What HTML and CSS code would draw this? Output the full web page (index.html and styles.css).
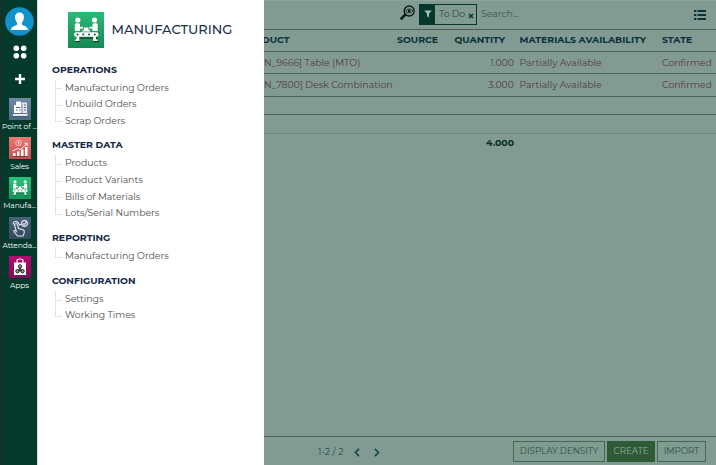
FILE: index.html
```html
<!DOCTYPE html>
<html lang="en">
<head>
<meta charset="utf-8">
<title>Manufacturing</title>
<link rel="stylesheet" href="styles.css">
</head>
<body>
<svg width="0" height="0" class="defs">
  <symbol id="factory" viewBox="0 0 36 36">
    <path d="M8 26h22M7 29.700h5M25 29.700h6" fill="none" stroke="#16492f" stroke-width="1.300"/>
    <g fill="#fff">
      <circle cx="9.800" cy="8" r="2.600"/><circle cx="26.500" cy="8" r="2.600"/>
      <path d="M6.800 12c0-1 5.200-1 5.200 0v2.800h3v2h-3V19H6.800zM29.700 12c0-1-5.200-1-5.200 0v2.800h-3v2h3V19h5.200z"/>
      <path d="M14.500 18h1.500v-2.500h4.500V18H22v1.500h-7.500z"/>
      <rect x="6" y="20.200" width="24.500" height="4.600" rx="2.300"/>
      <path d="M8.500 24.500h2.800V29H7v-1.500h1.500zM28 24.500h-2.800V29h4.300v-1.500H28z"/>
    </g>
    <g fill="#16492f"><circle cx="9.500" cy="22.500" r="1"/><circle cx="15.200" cy="22.500" r="1"/><circle cx="21" cy="22.500" r="1"/><circle cx="26.800" cy="22.500" r="1"/></g>
  </symbol>
</svg>
<div class="app">
  <nav class="rail">
    <svg class="avatar" viewBox="0 0 29 29"><circle cx="14.500" cy="14.500" r="14.300" fill="#1193c9"/><path d="M14.500 5.500c3.300 0 4.600 2.300 4.400 5.200-.2 2.200-1 3.800-2 4.800v2c1 1.500 5.800 1.500 6.300 5.500H5.800c.5-4 5.300-4 6.300-5.500v-2c-1-1-1.800-2.600-2-4.800-.2-2.900 1.100-5.200 4.400-5.200z" fill="#fff"/></svg>
    <svg class="dots" viewBox="0 0 14 14" fill="#fff"><circle cx="3.300" cy="3.300" r="2.800"/><circle cx="10.700" cy="3.300" r="2.800"/><circle cx="3.300" cy="10.700" r="2.800"/><circle cx="10.700" cy="10.700" r="2.800"/></svg>
    <svg class="plus" viewBox="0 0 12 12"><path d="M6 1v10M1 6h10" stroke="#fff" stroke-width="2.400"/></svg>
    <a class="tile pos"><svg viewBox="0 0 22 22"><path d="M5 7h9v8.500H5z" fill="#fff"/><path d="M12.500 4.500H18v11h-5.500zM4 15.500h14.500V18H4z" fill="#e4eaf0"/><path d="M7 3.500h5v4H7z" fill="#fff"/><path d="M7 9.500h4.500M7 12h1.500M10 12h1.500M15 7h2M15 9.500h2M15 12h2" stroke="#48627c"/><path d="M4 18.500h15M13 6.500V15M4 15.500h14" stroke="#354e68" stroke-width=".7"/></svg><span>Point of ...</span></a>
    <a class="tile sales"><svg viewBox="0 0 22 22"><path d="M4 16h2.500v3H4zM8 14.500h2.500V19H8zM12 12.500h2.500V19H12zM16 10h2.500v9H16z" fill="#fff"/><path d="M3.500 14l5-2.500 3 1L18 6.500M15.500 6.200h2.700v2.700" fill="none" stroke="#fff"/><circle cx="9.500" cy="6" r="2.800" fill="none" stroke="#f8d8d6" stroke-width=".8"/><path d="M9.700 4.500v3M8.800 5.300h1" stroke="#fff" stroke-width=".8"/><path d="M3.500 19.500h15.500" stroke="#7b3230" stroke-width=".8"/></svg><span>Sales</span></a>
    <a class="tile mfg"><svg viewBox="0 0 36 36"><use href="#factory"/></svg><span>Manufa...</span></a>
    <a class="tile att"><svg viewBox="0 0 22 22" fill="none" stroke="#e4eaf0" stroke-width="1.100"><circle cx="15.500" cy="6.500" r="2.900"/><path d="M14 6.500l1.200 1.200 2.600-3M4 7.500c0-4 5.500-4 6 0M5.500 8c.5-2 3-2 3 0l1 3.500 5 1.500c1.500 1 .500 4-.500 6H8.500L5 14.500c-.5-1.200 1-1.500 2.300-.300zM10 8l3-1"/></svg><span>Attenda...</span></a>
    <a class="tile apps"><svg viewBox="0 0 22 22"><path d="M5 6.500h12V19H5z" fill="#fff"/><path d="M8 8V4.500c0-2 6-2 6 0V8" fill="none" stroke="#fff" stroke-width="1.200"/><g fill="#999" stroke="#222"><circle cx="11" cy="10.500" r="1.700"/><circle cx="8.500" cy="15.200" r="1.700"/><circle cx="13.500" cy="15.200" r="1.700"/><path d="M11 12l-1.500 2.500h3z"/></g></svg><span>Apps</span></a>
  </nav>

  <aside class="menu">
    <header class="title"><svg viewBox="0 0 36 36"><use href="#factory"/></svg><h1>MANUFACTURING</h1></header>
    <section><h2>OPERATIONS</h2><ul><li>Manufacturing Orders</li><li>Unbuild Orders</li><li>Scrap Orders</li></ul></section>
    <section><h2>MASTER DATA</h2><ul><li>Products</li><li>Product Variants</li><li>Bills of Materials</li><li>Lots/Serial Numbers</li></ul></section>
    <section><h2>REPORTING</h2><ul><li>Manufacturing Orders</li></ul></section>
    <section><h2>CONFIGURATION</h2><ul><li>Settings</li><li>Working Times</li></ul></section>
  </aside>

  <main class="content">
    <div class="search">
      <svg class="lens" viewBox="0 0 16 16"><circle cx="9.200" cy="6" r="5" fill="none" stroke="#0a1d1a" stroke-width="1.400"/><path d="M5.300 9.700L1.500 13.500" stroke="#0a1d1a" stroke-width="2.600" stroke-linecap="round"/><path d="M5.500 6c2-2.700 5.400-2.700 7.400 0-2 2.500-5.400 2.500-7.400 0z" fill="none" stroke="#0a1d1a" stroke-width=".8"/><circle cx="9.200" cy="6" r="1.400" fill="#0a1d1a"/></svg>
      <div class="facet"><span class="funnel"><svg viewBox="0 0 8 8"><path d="M.3.500h7.400L5 3.800v3.700L3 6.300V3.800z" fill="#a6bbb3"/></svg></span><span class="todo">To Do</span><svg class="x" viewBox="0 0 6 6"><path d="M1 1l4 4M5 1L1 5" stroke="#04382d" stroke-width="1.500"/></svg></div>
      <span class="placeholder">Search...</span>
      <svg class="list" viewBox="0 0 12 10"><path d="M0 1h2.400M0 5h2.400M0 9h2.400M3.600 1H12M3.600 5H12M3.600 9H12" stroke="#0c3337" stroke-width="2"/></svg>
    </div>
    <div class="row head"><span class="product"><span>DUCT</span></span><span class="source">SOURCE</span><span class="qty">QUANTITY</span><span class="avail">MATERIALS AVAILABILITY</span><span class="state">STATE</span></div>
    <div class="row"><span class="product">N_9666] Table (MTO)</span><span></span><span class="qty">1.000</span><span class="avail">Partially Available</span><span class="state">Confirmed</span></div>
    <div class="row last"><span class="product">N_7800] Desk Combination</span><span></span><span class="qty">3.000</span><span class="avail">Partially Available</span><span class="state">Confirmed</span></div>
    <div class="blank"></div>
    <div class="blank faint"></div>
    <div class="row total"><span></span><span></span><span class="qty">4.000</span></div>
    <footer class="bottom">
      <span class="pages">1-2 / 2</span>
      <svg class="arrow" viewBox="0 0 6 9"><path d="M5 .800L1.500 4.500 5 8.200" fill="none" stroke="#194a49" stroke-width="1.700"/></svg>
      <svg class="arrow next" viewBox="0 0 6 9"><path d="M1 .800l3.500 3.700L1 8.200" fill="none" stroke="#194a49" stroke-width="1.700"/></svg>
      <div class="buttons"><button class="density">DISPLAY DENSITY</button><button class="create">CREATE</button><button class="import">IMPORT</button></div>
    </footer>
  </main>
</div>
</body>
</html>
```

FILE: styles.css
```css
* { box-sizing: border-box; }
body { margin: 0; font-family: Montserrat, Inter, sans-serif; font-size: 9.350px; color: #555; }
h1, h2, ul { margin: 0; padding: 0; font-weight: normal; }
svg { display: block; flex: none; }
.defs { position: absolute; }
.app { display: flex; width: 716px; height: 465px; overflow: hidden; background: #fff; }

.rail { width: 38px; flex: none; padding: 7px 0 0 1px; border-left: 1px solid #292929; border-right: 1px solid #d3dfdb; background: #033a2c; display: flex; flex-direction: column; align-items: center; }
.avatar { width: 29px; height: 29px; }
.dots { width: 14px; height: 14px; margin-top: 9px; }
.plus { width: 12px; height: 12px; margin: 14px 0 12.500px; }
.tile { height: 39.700px; width: 36px; display: flex; flex-direction: column; align-items: center; color: #fff; font-size: 7.500px; line-height: 9px; white-space: nowrap; letter-spacing: -.1px; }
.tile svg { width: 22px; height: 22px; margin-bottom: 2.500px; background: linear-gradient(#718aa5, #4e6984); }
.tile.sales svg { background: linear-gradient(#ec7773, #c94f4e); }
.tile.mfg svg { background: linear-gradient(#28c47b, #149358); }
.tile.att svg { background: linear-gradient(#496179, #35495d); }
.tile.apps svg { background: linear-gradient(#b10b73, #8b0759); }

.menu { width: 226px; flex: none; padding: 11px 0 0 14px; }
.title { display: flex; align-items: center; height: 37px; margin: 0 0 11.500px 16px; }
.title svg { width: 36px; height: 36px; background: linear-gradient(#29bb78, #178853); }
.title h1 { margin: -2px 0 0 7.500px; font-size: 13px; font-weight: 500; color: #1b2f4b; }
section { margin-bottom: 6.200px; }
h2 { height: 20px; line-height: 19.500px; font-size: 9.350px; font-weight: 700; color: #142848; }
ul { list-style: none; }
li { display: flex; height: 16.600px; line-height: 16px; margin-left: 3px; color: #505050; white-space: nowrap; letter-spacing: -.02px; }
li::before { content: ""; width: 6px; height: 8.800px; margin-right: 3px; border-left: 1px solid #dfe2e5; border-bottom: 1px solid #dfe2e5; }
li:not(:last-child) { background: linear-gradient(#dfe2e5, #dfe2e5) left / 1px 100% no-repeat; }

.content { width: 452px; flex: none; background: #819a92; display: flex; flex-direction: column; }
.search { display: flex; align-items: center; height: 30px; border-top: 1px solid #90a49e; border-bottom: 1px solid #525e5a; padding: 0 10px 2px 136px; }
.lens { width: 16px; height: 16px; margin-top: -2px; }
.facet { display: flex; align-items: center; width: 58px; height: 21px; margin: 0 4px 0 3px; border: 1px solid #04382d; color: #274d46; }
.funnel { width: 15px; height: 19px; background: #04382d; display: flex; align-items: center; justify-content: center; }
.funnel svg { width: 8px; height: 8px; }
.todo { margin: -2px 0 0 4px; width: 29px; white-space: nowrap; letter-spacing: -.15px; }
.x { width: 6px; height: 6px; margin-top: 3px; }
.placeholder { margin-top: -1px; color: #345750; }
.list { width: 12px; height: 10px; margin: 2px 0 0 auto; }
.row { display: grid; grid-template-columns: 133px 48px 69px 142px 1fr; align-items: center; height: 22.300px; padding-bottom: 1px; border-bottom: 1px solid #525e5a; color: #583c3e; white-space: nowrap; }
.row.head { height: 22px; padding-bottom: 2px; color: #0c3138; font-weight: 700; }
.product { overflow: hidden; }
.head .product span { margin-left: -2px; }
.row.last { border-bottom-width: 1.500px; }
.qty { text-align: right; }
.head .qty { padding-right: 9px; }
.avail { padding-left: 5.500px; }
.state { padding-left: 6px; }
.blank { height: 18.500px; border-bottom: 1px solid #525e5a; }
.blank.faint { border-color: #71877f; }
.row.total { border: 0; height: 20px; padding-bottom: 2px; color: #082e27; font-weight: 700; }
.bottom { display: flex; align-items: center; height: 29px; margin-top: auto; padding: 1px 10px 0 54px; border-top: 1px solid #525e5a; color: #284d4a; }
.pages { width: 36px; white-space: nowrap; }
.arrow { width: 6px; height: 9px; margin-top: 2px; }
.arrow.next { margin-left: 14px; }
.buttons { display: flex; gap: 2px; margin-left: auto; }
button { height: 21px; padding: 0 0 1px; border: 1px solid #3f6b50; background: transparent; color: #2b573f; font: 8.700px Montserrat, Inter, sans-serif; white-space: nowrap; }
.density { width: 92px; }
.create { width: 48px; background: #2e5a38; border-color: #2e5a38; color: #8eaa98; }
.import { width: 49px; }
```
